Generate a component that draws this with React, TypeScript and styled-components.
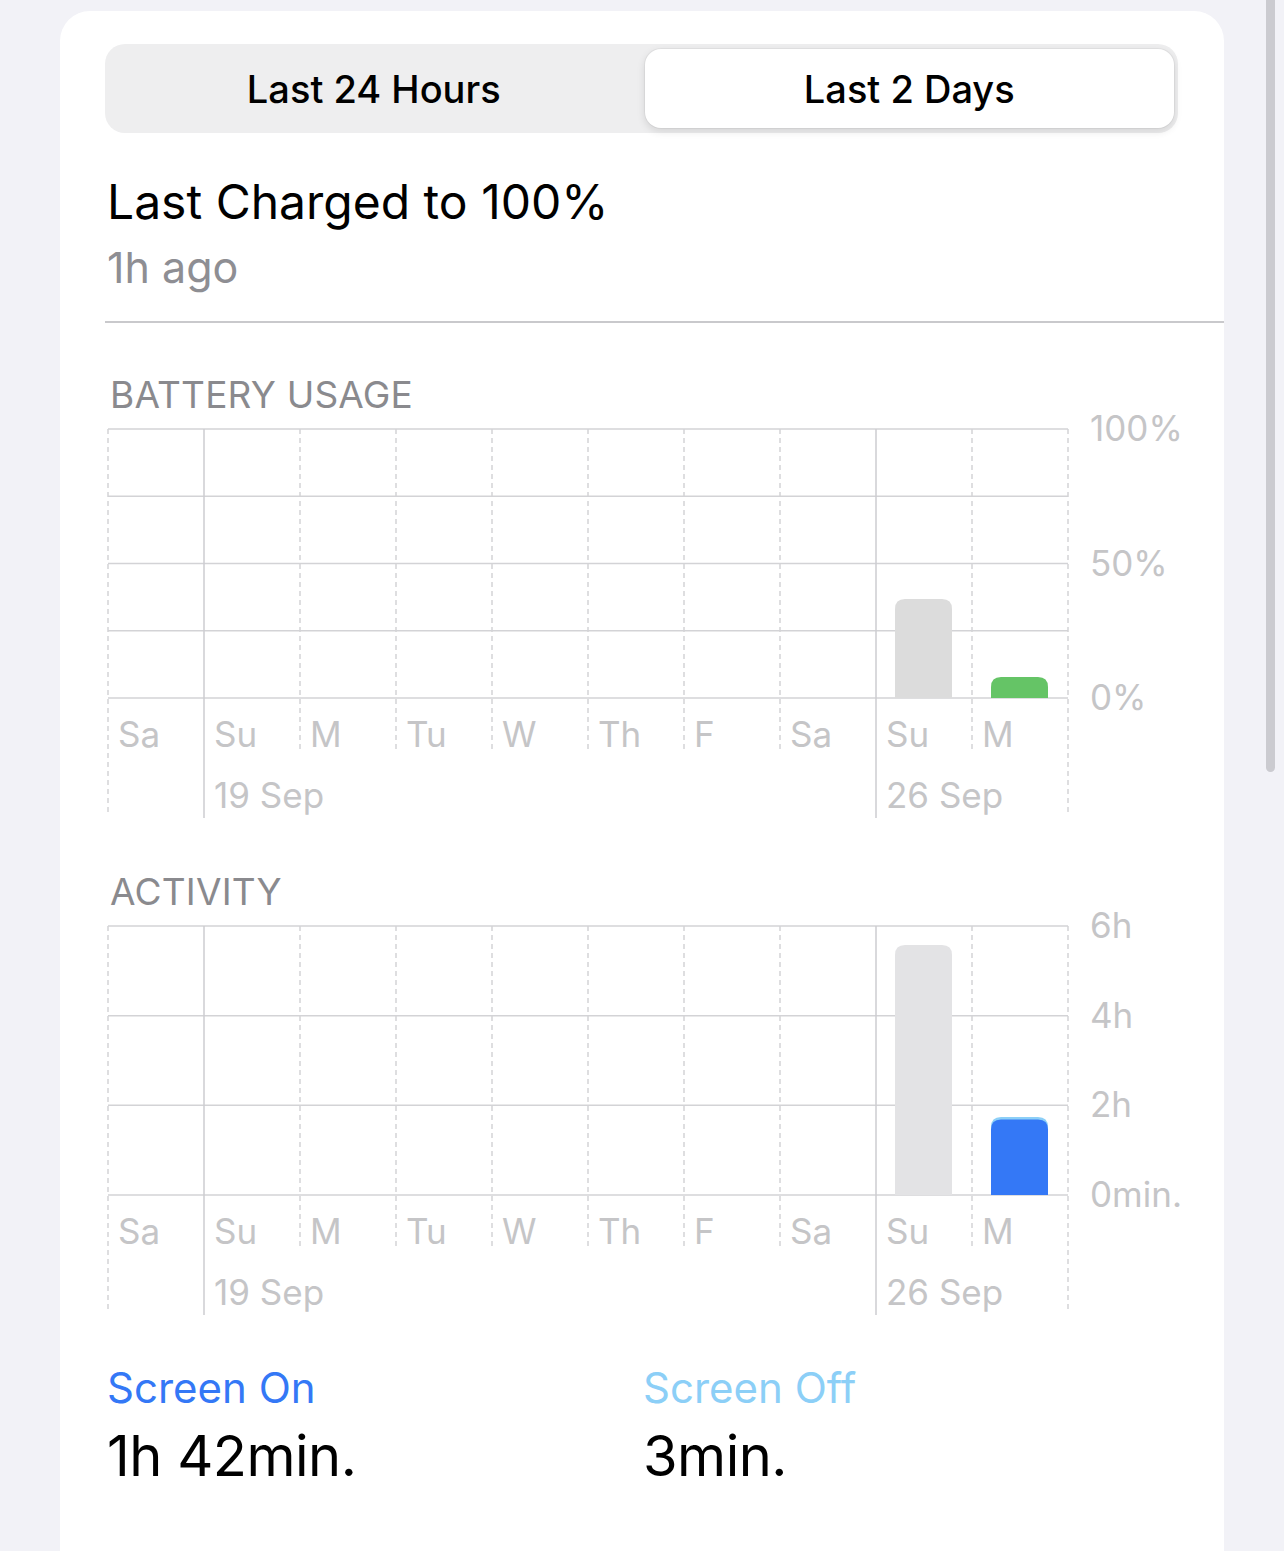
import React from "react";
import styled, { createGlobalStyle } from "styled-components";

const GlobalStyle = createGlobalStyle`
  html, body {
    margin: 0;
    padding: 0;
    background: #f2f2f7;
    overflow: hidden;
  }
  body {
    font-family: Inter, "Noto Sans", "Liberation Sans", sans-serif;
    -webkit-font-smoothing: antialiased;
  }
`;

const Page = styled.div`
  display: flex;
  padding: 11px 0 0 60px;
  height: 1551px;
  box-sizing: border-box;
`;

const Card = styled.div`
  width: 1164px;
  min-height: 1600px;
  background: #ffffff;
  border-radius: 30px 30px 0 0;
  padding: 33px 0 0 45px;
  box-sizing: border-box;
  display: flex;
  flex-direction: column;
`;

const ScrollIndicator = styled.div`
  position: fixed;
  top: 0;
  left: 1266px;
  width: 9px;
  height: 772px;
  background: #cbcbd0;
  border-radius: 0 0 5px 5px;
`;

const Segmented = styled.div`
  display: grid;
  grid-template-columns: 1fr 1fr;
  gap: 6px;
  width: 1073px;
  height: 89px;
  box-sizing: border-box;
  padding: 5px 4px;
  background: #eeeeef;
  border-radius: 20px;
`;

const Segment = styled.div<{ $active?: boolean }>`
  display: flex;
  align-items: center;
  justify-content: center;
  border-radius: 16px;
  font-size: 38px;
  font-weight: 500;
  color: #000;
  background: ${(p) => (p.$active ? "#ffffff" : "transparent")};
  box-shadow: ${(p) =>
    p.$active
      ? "0 3px 8px rgba(0,0,0,0.12), 0 0 0 1px rgba(0,0,0,0.04)"
      : "none"};
`;

const Title = styled.div`
  margin-top: 40px;
  font-size: 48px;
  line-height: 58px;
  color: #000;
  padding-left: 2px;
`;

const Subtitle = styled.div`
  margin-top: 10px;
  font-size: 43px;
  line-height: 52px;
  color: #8e8e93;
  padding-left: 2px;
`;

const Separator = styled.div`
  margin-top: 28px;
  height: 1.5px;
  background: #c9c9cc;
`;

const SectionHeader = styled.div<{ $top: number }>`
  margin-top: ${(p) => p.$top}px;
  font-size: 37px;
  line-height: 44px;
  color: #8a8a8e;
  padding-left: 5px;
  letter-spacing: 0.2px;
`;

const ChartSvg = styled.svg`
  display: block;
  margin-left: 3px;
  overflow: visible;
  text {
    font-family: Inter, "Noto Sans", "Liberation Sans", sans-serif;
    font-size: 35px;
    fill: #c5c5c7;
  }
`;

const Stats = styled.div`
  margin-top: 44px;
  display: grid;
  grid-template-columns: 536px 1fr;
`;

const Stat = styled.div`
  display: flex;
  flex-direction: column;
  padding-left: 2px;
`;

const StatLabel = styled.div<{ $color: string }>`
  font-size: 42px;
  line-height: 50px;
  color: ${(p) => p.$color};
`;

const StatValue = styled.div`
  margin-top: 10px;
  font-size: 56px;
  line-height: 66px;
  color: #000;
  letter-spacing: -0.5px;
`;

const days = ["Sa", "Su", "M", "Tu", "W", "Th", "F", "Sa", "Su", "M"];
const SUNDAYS = [1, 8];
const COL = 96;
const GRID_W = COL * 10;
const TOP = 12;
const BASE = 281;

type Bar = { col: number; value: number; color: string; cap?: string };

type ChartProps = {
  lines: number;
  ticks: { at: number; label: string }[];
  bars: Bar[];
  dates: { col: number; label: string }[];
};

function Chart({ lines, ticks, bars, dates }: ChartProps) {
  const plotH = BASE - TOP;
  const step = plotH / (lines - 1);
  const lineColor = "#d3d3d6";
  return (
    <ChartSvg width={1110} height={405} viewBox="0 0 1110 405">
      {Array.from({ length: lines }).map((_, i) => {
        const y = TOP + step * i;
        return (
          <line key={i} x1={0} x2={GRID_W} y1={y} y2={y} stroke={lineColor} strokeWidth={1.5} />
        );
      })}
      {ticks.map((t) => (
        <text key={t.label} x={982} y={TOP + step * t.at + 12}>
          {t.label}
        </text>
      ))}
      {Array.from({ length: 11 }).map((_, i) => {
        const x = i * COL;
        const sunday = SUNDAYS.includes(i);
        const outer = i === 0 || i === 10;
        const y2 = sunday ? 401 : outer ? 395 : 335;
        return (
          <line
            key={i}
            x1={x}
            x2={x}
            y1={TOP}
            y2={y2}
            stroke={sunday ? "#cdcdd0" : lineColor}
            strokeWidth={1.5}
            strokeDasharray={sunday ? undefined : "5 4"}
          />
        );
      })}
      {bars.map((b) => {
        const h = plotH * b.value;
        const x = b.col * COL + 19;
        const y = BASE - h;
        const r = 10;
        const path = (top: number) =>
          `M${x} ${BASE} V${top + r} Q${x} ${top} ${x + r} ${top} H${x + 57 - r} Q${x + 57} ${top} ${x + 57} ${top + r} V${BASE} Z`;
        return (
          <g key={b.col}>
            {b.cap && <path d={path(y)} fill={b.cap} />}
            <path d={path(b.cap ? y + 2.5 : y)} fill={b.color} />
          </g>
        );
      })}
      {days.map((d, i) => (
        <text key={i} x={i * COL + 10} y={330}>
          {d}
        </text>
      ))}
      {dates.map((d) => (
        <text key={d.label} x={d.col * COL + 10} y={391}>
          {d.label}
        </text>
      ))}
    </ChartSvg>
  );
}

const dates = [
  { col: 1, label: "19 Sep" },
  { col: 8, label: "26 Sep" },
];

export default function App() {
  return (
    <>
      <GlobalStyle />
      <Page>
        <Card>
          <Segmented>
            <Segment>Last 24 Hours</Segment>
            <Segment $active>Last 2 Days</Segment>
          </Segmented>
          <Title>Last Charged to 100%</Title>
          <Subtitle>1h ago</Subtitle>
          <Separator />
          <SectionHeader $top={50}>BATTERY USAGE</SectionHeader>
          <Chart
            lines={5}
            ticks={[
              { at: 0, label: "100%" },
              { at: 2, label: "50%" },
              { at: 4, label: "0%" },
            ]}
            bars={[
              { col: 8, value: 99 / 269, color: "#dcdcdc" },
              { col: 9, value: 21 / 269, color: "#65c466" },
            ]}
            dates={dates}
          />
          <SectionHeader $top={48}>ACTIVITY</SectionHeader>
          <Chart
            lines={4}
            ticks={[
              { at: 0, label: "6h" },
              { at: 1, label: "4h" },
              { at: 2, label: "2h" },
              { at: 3, label: "0min." },
            ]}
            bars={[
              { col: 8, value: 250 / 269, color: "#e3e3e5" },
              { col: 9, value: 78 / 269, color: "#3478f6", cap: "#8ccff7" },
            ]}
            dates={dates}
          />
          <Stats>
            <Stat>
              <StatLabel $color="#3478f6">Screen On</StatLabel>
              <StatValue>1h 42min.</StatValue>
            </Stat>
            <Stat>
              <StatLabel $color="#8ccff7">Screen Off</StatLabel>
              <StatValue>3min.</StatValue>
            </Stat>
          </Stats>
        </Card>
      </Page>
      <ScrollIndicator />
    </>
  );
}
